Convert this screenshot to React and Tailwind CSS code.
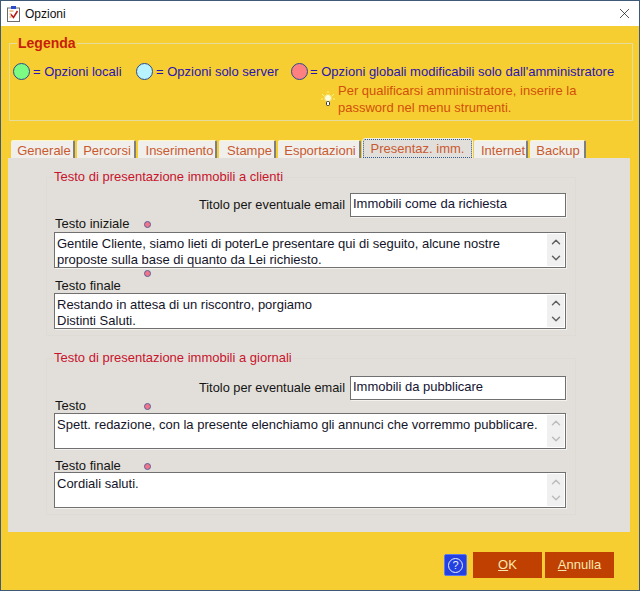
import { ChevronUp, ChevronDown, X } from 'lucide-react'

const font = { fontFamily: '"Liberation Sans", Arial, sans-serif' }

const tabs = [
  { label: 'Generale', w: 'w-[64px] pl-[4px]' },
  { label: 'Percorsi', w: 'w-[59px] pl-[3px]' },
  { label: 'Inserimento', w: 'w-[79px] pl-[6px]' },
  { label: 'Stampe', w: 'w-[57px] pl-[6px]' },
  { label: 'Esportazioni', w: 'w-[83px] pl-[3px]' },
  { label: 'Presentaz. imm.', w: 'w-[109px]', active: true },
  { label: 'Internet', w: 'w-[54px] pl-[6px]' },
  { label: 'Backup', w: 'w-[56px] pl-[2px]' },
]

function Dot() {
  return <span className="block w-[7px] h-[7px] rounded-full bg-[#f0748a] border border-[#5a5f9a]" />
}

function Swatch({ color }) {
  return <span className={`block w-[17px] h-[17px] rounded-full border-[1.5px] border-[#2b4a8c] ${color}`} />
}

function TextBox({ lines, disabled }) {
  return (
    <div className="flex h-[36px] w-[512px] bg-white border border-[#707070] shadow-[1px_1px_0_#f4f2ee]">
      <div className="flex-1 pl-[2px] pt-[3px] text-[13px] leading-[16px] text-[#141428] overflow-hidden whitespace-pre">
        {lines.map((l) => <div key={l}>{l}</div>)}
      </div>
      <div className={`w-[17px] mr-[1px] my-[1px] flex flex-col justify-between items-center bg-[#f0f0f0] py-[1px] ${disabled ? 'text-[#bdbdbd]' : 'text-[#606060]'}`}>
        <ChevronUp size={14} strokeWidth={2.5} />
        <ChevronDown size={14} strokeWidth={2.5} />
      </div>
    </div>
  )
}

function EmailRow({ value }) {
  return (
    <div className="flex items-center justify-end gap-[5px] pr-[9px]">
      <span className="text-[12.8px] text-[#141414]">Titolo per eventuale email</span>
      <div className="w-[216px] h-[24px] bg-white border border-[#707070] shadow-[1px_1px_0_#f4f2ee] pl-[2px] text-[13px] leading-[19px] text-[#141432]">
        {value}
      </div>
    </div>
  )
}

function Group({ title, children }) {
  return (
    <fieldset className="w-[530px] ml-[38px] border border-[#dedbd5]">
      <legend className="ml-[7px] text-[13px] leading-[16px] text-[#c8142d]">{title}</legend>
      {children}
    </fieldset>
  )
}

function FieldLabel({ text, dot = true }) {
  return (
    <div className="flex items-center h-[14px] pl-[8px] text-[13px] leading-[14px] text-[#141414]">
      <span className="w-[89px]">{text}</span>
      {dot && <Dot />}
    </div>
  )
}

export default function App() {
  return (
    <div style={font} className="w-[640px] h-[591px] flex flex-col bg-[#f6ce32] border border-[#3e5a78] overflow-hidden">
      <div className="h-[25px] shrink-0 bg-white flex items-center justify-between pl-[6px] pr-[6px]">
        <div className="flex items-center gap-[5px]">
          <svg width="13" height="16" viewBox="0 0 13 16">
            <rect x="0.5" y="2" width="12" height="13.5" fill="#fff" stroke="#6b6b6b" />
            <rect x="4" y="0" width="5" height="3" fill="#2b4ac8" />
            <path d="M2.5 5h4M2.5 8h2M2.5 11h2" stroke="#e08a30" strokeWidth="1" />
            <path d="M4 8.5l2.5 3L10.5 5" fill="none" stroke="#b81818" strokeWidth="1.6" />
          </svg>
          <span className="text-[12px] text-[#101010]">Opzioni</span>
        </div>
        <X size={17} strokeWidth={1} className="text-[#111]" />
      </div>

      <fieldset className="w-[624px] h-[86px] ml-[8px] mt-[9px] shrink-0 border border-[#e6dc9c] pl-[3px]">
        <legend className="ml-[4px] px-[1px] text-[14px] leading-[16px] font-bold text-[#c81e0a]">Legenda</legend>
        <div className="flex items-center mt-[12px] text-[13px] leading-[16px] text-[#2a14b4]">
          <Swatch color="bg-[#7cfc82]" />
          <span className="ml-[3px] w-[103px]">= Opzioni locali</span>
          <Swatch color="bg-[#b8f4ff]" />
          <span className="ml-[3px] w-[135px]">= Opzioni solo server</span>
          <Swatch color="bg-[#ff8080]" />
          <span className="ml-[2px] whitespace-nowrap">= Opzioni globali modificabili solo dall'amministratore</span>
        </div>
        <div className="flex items-center ml-[308px] mt-[2px]">
          <svg width="14" height="16" viewBox="0 0 14 16" className="shrink-0">
            <path d="M7 0v2M1 3l2 2M13 3l-2 2M0 8h2M12 8h2" stroke="#fff27a" strokeWidth="1" />
            <circle cx="7" cy="7" r="3.5" fill="#fffbe0" stroke="#f2e060" />
            <rect x="5.5" y="10.5" width="3" height="4" rx="1" fill="#fff" stroke="#333" />
          </svg>
          <div className="ml-[3px] text-[13px] leading-[17px] text-[#d2500a] whitespace-nowrap">
            <div>Per qualificarsi amministratore, inserire la</div>
            <div>password nel menu strumenti.</div>
          </div>
        </div>
      </fieldset>

      <div className="flex items-end h-[20px] mt-[17px] ml-[10px] gap-[2px] shrink-0">
        {tabs.map((t) => (
          <div
            key={t.label}
            className={`${t.w} shrink-0 flex items-center justify-center text-[13px] rounded-t-[2px] whitespace-nowrap text-[#c95a30] ${
              t.active
                ? 'h-[19px] bg-[#e2dfda] border border-dotted border-[#2f5a8c] outline outline-[#f2efe0]'
                : 'h-[18px] pt-[2px] bg-[#f0efeb] border-r-2 border-r-[#7f7f7f] border-t border-t-[#fff6c8]'
            }`}
          >
            {t.label}
          </div>
        ))}
      </div>

      <div className="w-[622px] h-[374px] ml-[7px] bg-[#e2dfda] pt-[11px] shrink-0">
        <Group title="Testo di presentazione immobili a clienti">
          <div className="mt-[8px]">
            <EmailRow value="Immobili come da richiesta" />
          </div>
          <FieldLabel text="Testo iniziale" />
          <div className="pl-[7px] mt-[1px]">
            <TextBox lines={['Gentile Cliente, siamo lieti di poterLe presentare qui di seguito, alcune nostre', 'proposte sulla base di quanto da Lei richiesto.']} />
          </div>
          <div className="pl-[97px] mt-[2px]"><Dot /></div>
          <div className="mt-[2px]"><FieldLabel text="Testo finale" dot={false} /></div>
          <div className="pl-[7px] pb-[6px]">
            <TextBox lines={['Restando in attesa di un riscontro, porgiamo', 'Distinti Saluti.']} />
          </div>
        </Group>

        <div className="mt-[14px]">
          <Group title="Testo di presentazione immobili a giornali">
            <div className="mt-[10px]">
              <EmailRow value="Immobili da pubblicare" />
            </div>
            <div className="-mt-[1px]"><FieldLabel text="Testo" /></div>
            <div className="pl-[7px]">
              <TextBox disabled lines={['Spett. redazione, con la presente elenchiamo gli annunci che vorremmo pubblicare.']} />
            </div>
            <div className="mt-[10px]"><FieldLabel text="Testo finale" /></div>
            <div className="pl-[7px] -mt-[1px] pb-[6px]">
              <TextBox disabled lines={['Cordiali saluti.']} />
            </div>
          </Group>
        </div>
      </div>

      <div className="flex items-center justify-end gap-[3px] mt-[20px] pr-[25px]">
        <div className="w-[23px] h-[22px] mr-[3px] rounded-[2px] bg-[#2440e0] border border-[#5a78f0] flex items-center justify-center">
          <span className="w-[15px] h-[15px] rounded-full border border-[#e8f0ff] text-[#e8f0ff] text-[11px] leading-[13px] text-center">?</span>
        </div>
        <button className="w-[69px] h-[26px] bg-[#bf4000] text-[#f8e8b0] text-[13px]"><u>O</u>K</button>
        <button className="w-[69px] h-[26px] bg-[#bf4000] text-[#f8e8b0] text-[13px]"><u>A</u>nnulla</button>
      </div>
    </div>
  )
}
